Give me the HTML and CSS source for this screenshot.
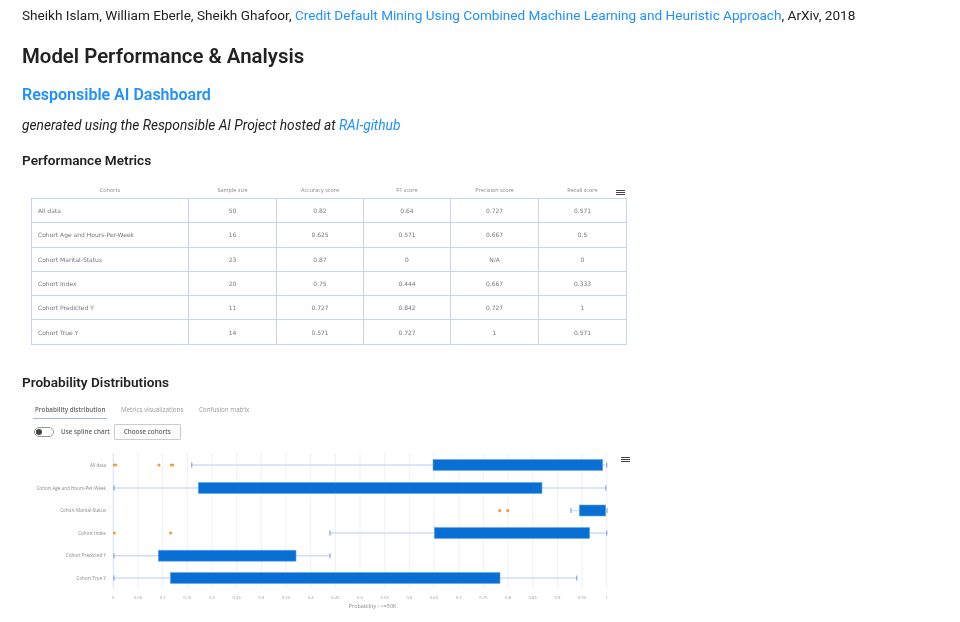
FILE: index.html
```html
<!DOCTYPE html>
<html lang="en">
<head>
<meta charset="utf-8">
<title>Model Performance &amp; Analysis</title>
<link rel="stylesheet" href="styles.css">
</head>
<body>
<p class="cite">Sheikh Islam, William Eberle, Sheikh Ghafoor, <a href="#">Credit Default Mining Using Combined Machine Learning and Heuristic Approach</a>, ArXiv, 2018</p>
<h1>Model Performance &amp; Analysis</h1>
<h2><a href="#">Responsible AI Dashboard</a></h2>
<p class="note">generated using the Responsible AI Project hosted at <a href="#">RAI-github</a></p>
<h3 class="metrics-title">Performance Metrics</h3>
<div class="table-shot">
  <table>
    <thead>
      <tr><th class="c1">Cohorts</th><th class="c2">Sample size</th><th class="c3">Accuracy score</th><th class="c4">F1 score</th><th class="c5">Precision score</th><th class="c6">Recall score</th></tr>
    </thead>
    <tbody>
      <tr><td>All data</td><td>50</td><td>0.82</td><td>0.64</td><td>0.727</td><td>0.571</td></tr>
      <tr><td>Cohort Age and Hours-Per-Week</td><td>16</td><td>0.625</td><td>0.571</td><td>0.667</td><td>0.5</td></tr>
      <tr><td>Cohort Marital-Status</td><td>23</td><td>0.87</td><td>0</td><td>N/A</td><td>0</td></tr>
      <tr><td>Cohort Index</td><td>20</td><td>0.75</td><td>0.444</td><td>0.667</td><td>0.333</td></tr>
      <tr><td>Cohort Predicted Y</td><td>11</td><td>0.727</td><td>0.842</td><td>0.727</td><td>1</td></tr>
      <tr><td>Cohort True Y</td><td>14</td><td>0.571</td><td>0.727</td><td>1</td><td>0.571</td></tr>
    </tbody>
  </table>
  <span class="burger burger-table"></span>
</div>
<h3 class="dist-title">Probability Distributions</h3>
<div class="chart-shot">
  <div class="tabs">
    <span class="tab active">Probability distribution</span>
    <span class="tab">Metrics visualizations</span>
    <span class="tab">Confusion matrix</span>
  </div>
  <div class="controls">
    <span class="toggle"><span class="knob"></span></span>
    <span class="toggle-label">Use spline chart</span>
    <span class="btn">Choose cohorts</span>
  </div>
  <svg class="plot" width="620" height="172" viewBox="0 0 620 172" xmlns="http://www.w3.org/2000/svg">
    <path class="grid" d="M116 3V138M140.6 3V138M165.3 3V138M190 3V138M214.7 3V138M239.3 3V138M264 3V138M288.7 3V138M313.4 3V138M338 3V138M362.7 3V138M387.4 3V138M412 3V138M436.7 3V138M461.4 3V138M486 3V138M510.7 3V138M535.4 3V138M560 3V138M584.7 3V138"/>
    <path class="axis" d="M91.3 3V138"/>
    <g class="row-labels">
      <text x="84" y="16.5">All data</text>
      <text x="84" y="39.5">Cohort Age and Hours-Per-Week</text>
      <text x="84" y="62">Cohort Marital-Status</text>
      <text x="84" y="84.5">Cohort Index</text>
      <text x="84" y="107">Cohort Predicted Y</text>
      <text x="84" y="129.5">Cohort True Y</text>
    </g>
    <path class="whisker" d="M169.7 15H584.7M92 38H583.7M549 60.6H585M308 83H584.7M92 105.7H308M92 128H554.7"/>
    <path class="cap" d="M169.7 12.5V17.5M584.7 12.5V17.5M92 35.500V40.500M583.700 35.500V40.500M549 58V63M585 58V63M308 80.500V85.500M584.700 80.500V85.500M92 103.200V108.200M308 103.200V108.200M92 125.500V130.500M554.700 125.500V130.500"/>
    <g class="box">
      <rect x="411" y="9.500" width="169.700" height="11"/>
      <rect x="176.300" y="32.500" width="343.700" height="11"/>
      <rect x="557.300" y="55" width="26.400" height="11"/>
      <rect x="412.300" y="77.500" width="155.400" height="11"/>
      <rect x="136.300" y="100.200" width="137.700" height="11"/>
      <rect x="148.300" y="122.500" width="329.700" height="11"/>
    </g>
    <g class="outlier">
      <ellipse cx="93" cy="15" rx="2.300" ry="1.500"/>
      <ellipse cx="137" cy="15" rx="1.600" ry="1.600"/>
      <ellipse cx="150" cy="15" rx="2.300" ry="1.500"/>
      <circle cx="477.700" cy="60.600" r="1.600"/>
      <circle cx="485.700" cy="60.600" r="1.600"/>
      <circle cx="92.300" cy="83" r="1.600"/>
      <circle cx="148.700" cy="83" r="1.600"/>
    </g>
    <g class="ticks">
      <text x="91.300" y="149">0</text><text x="116" y="149">0.05</text><text x="140.600" y="149">0.1</text><text x="165.300" y="149">0.15</text><text x="190" y="149">0.2</text><text x="214.700" y="149">0.25</text><text x="239.300" y="149">0.3</text><text x="264" y="149">0.35</text><text x="288.700" y="149">0.4</text><text x="313.400" y="149">0.45</text><text x="338" y="149">0.5</text><text x="362.700" y="149">0.55</text><text x="387.400" y="149">0.6</text><text x="412" y="149">0.65</text><text x="436.700" y="149">0.7</text><text x="461.400" y="149">0.75</text><text x="486" y="149">0.8</text><text x="510.700" y="149">0.85</text><text x="535.400" y="149">0.9</text><text x="560" y="149">0.95</text><text x="584.700" y="149">1</text>
    </g>
    <text class="axis-title" x="350.500" y="158">Probability : &lt;=50K</text>
  </svg>
  <span class="burger burger-chart"></span>
</div>
</body>
</html>
```
FILE: styles.css
```css
html, body {
  margin: 0;
  padding: 0;
  background: #fff;
}
body {
  height: 622px;
  overflow: hidden;
  padding-left: 22px;
  font-family: Roboto, "Liberation Sans", sans-serif;
  color: #222;
}
a {
  color: #1e90ff;
  text-decoration: none;
}
p, h1, h2, h3 {
  margin: 0;
  filter: blur(0.3px);
}
.cite {
  padding-top: 5px;
  font-size: 13.600px;
  line-height: 20px;
  white-space: nowrap;
}
h1 {
  margin-top: 17px;
  font-size: 20.400px;
  line-height: 28px;
  font-weight: 600;
}
h2 {
  margin-top: 14px;
  font-size: 16px;
  line-height: 22px;
  font-weight: 600;
}
.note {
  margin-top: 9px;
  font-size: 13.750px;
  line-height: 20px;
  font-style: italic;
}
h3 {
  font-size: 13.600px;
  line-height: 20px;
  font-weight: 600;
}
.metrics-title {
  margin-top: 15px;
}
.dist-title {
  margin-top: 27px;
}

/* Embedded screenshot of the metrics table */
.table-shot {
  position: relative;
  width: 620px;
  margin-top: 13px;
  padding-left: 9px;
  filter: blur(0.5px);
}
table {
  width: 595px;
  table-layout: fixed;
  border-collapse: collapse;
  font-family: "DejaVu Sans", "Liberation Sans", sans-serif;
  font-size: 6px;
  color: #777;
}
th {
  height: 14px;
  padding: 0 0 1px;
  font-family: "Open Sans", "Liberation Sans", sans-serif;
  font-size: 5.500px;
  font-weight: 400;
  color: #888;
  text-align: center;
}
.c1 { width: 157px; }
.c2 { width: 88px; }
.c3 { width: 87px; }
.c4 { width: 87px; }
.c5 { width: 88px; }
.c6 { width: 88px; }
td {
  height: 23.300px;
  padding: 0;
  border: 1px solid #c4d4f5;
  text-align: center;
}
td:first-child {
  padding-left: 6px;
  text-align: left;
}
.burger {
  position: absolute;
  width: 9px;
  height: 1px;
  background: #444;
  box-shadow: 0 2px 0 #444, 0 4px 0 #444;
}
.burger-table {
  top: 7px;
  left: 594px;
}
.burger-chart {
  top: 57px;
  left: 599px;
}

/* Embedded screenshot of the probability chart */
.chart-shot {
  position: relative;
  width: 620px;
  margin-top: 8px;
  font-family: "Open Sans", "Liberation Sans", sans-serif;
  filter: blur(0.5px);
}
.tabs {
  display: flex;
  gap: 11.500px;
  height: 19px;
  padding-left: 11px;
  font-size: 6.300px;
  color: #999;
}
.tab {
  padding: 0 2px;
  line-height: 19px;
}
.tab.active {
  color: #666;
  font-weight: 600;
  border-bottom: 1px solid #a0b9ec;
}
.controls {
  display: flex;
  align-items: center;
  height: 16px;
  margin-top: 5px;
  padding-left: 12px;
  font-size: 6.300px;
  color: #666;
}
.toggle {
  display: block;
  box-sizing: border-box;
  width: 20px;
  height: 10px;
  border: 1px solid #999;
  border-radius: 5px;
  padding: 1px;
}
.knob {
  display: block;
  width: 6px;
  height: 6px;
  border-radius: 50%;
  background: #444;
}
.toggle-label {
  margin-left: 7px;
  font-weight: 600;
}
.btn {
  box-sizing: border-box;
  width: 67px;
  height: 16px;
  margin-left: 4px;
  border: 1px solid #ccc;
  border-radius: 1px;
  text-align: center;
  line-height: 14px;
  font-weight: 600;
}
.plot {
  display: block;
  margin-top: 10px;
}
.grid {
  stroke: #f0f2f6;
  stroke-width: 1.200;
  fill: none;
}
.axis {
  stroke: #d3dff7;
  stroke-width: 1;
  fill: none;
}
.row-labels text {
  font-size: 4.600px;
  fill: #888;
  text-anchor: end;
}
.whisker {
  stroke: #d0dcf7;
  stroke-width: 1.400;
  fill: none;
}
.cap {
  stroke: #94afe8;
  stroke-width: 1.400;
  fill: none;
}
.box rect {
  fill: #0a6fd4;
  stroke: #6aa9ea;
  stroke-width: 0.600;
}
.outlier {
  fill: #f39a45;
}
.ticks text {
  font-size: 4.200px;
  fill: #999;
  text-anchor: middle;
}
.axis-title {
  font-size: 5.500px;
  fill: #888;
  text-anchor: middle;
}
```
